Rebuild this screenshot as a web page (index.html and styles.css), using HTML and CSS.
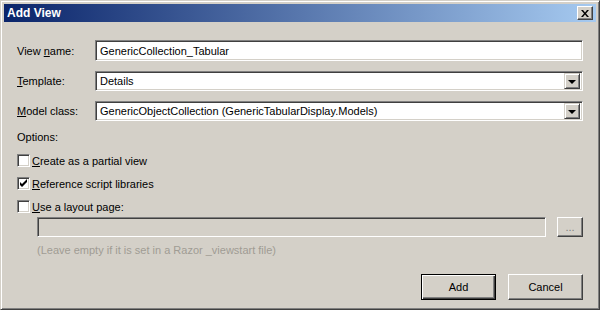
FILE: index.html
```html
<!DOCTYPE html>
<html lang="en">
<head>
    <meta charset="UTF-8">
    <title>Add View</title>
    <link rel="stylesheet" href="styles.css">
</head>
<body>
    <div class="window">
        <div class="titlebar">
            <span class="title">Add View</span>
            <div class="close-btn">
                <svg width="8" height="7" viewBox="0 0 8 7"><path d="M0 0h2l2 2.5 2-2.5h2l-3 3.5 3 3.5h-2l-2-2.5-2 2.5h-2l3-3.5z" fill="#000"/></svg>
            </div>
        </div>
        <div class="content">
            <div class="field-row row-name">
                <label>View <u>n</u>ame:</label>
                <div class="textbox">GenericCollection_Tabular</div>
            </div>
            <div class="field-row">
                <label><u>T</u>emplate:</label>
                <div class="textbox combo">
                    <span>Details</span>
                    <div class="drop-btn"><span class="arrow"></span></div>
                </div>
            </div>
            <div class="field-row">
                <label><u>M</u>odel class:</label>
                <div class="textbox combo">
                    <span>GenericObjectCollection (GenericTabularDisplay.Models)</span>
                    <div class="drop-btn"><span class="arrow"></span></div>
                </div>
            </div>

            <div class="options-label">Options:</div>
            <div class="check-row">
                <span class="checkbox"></span>
                <span><u>C</u>reate as a partial view</span>
            </div>
            <div class="check-row">
                <span class="checkbox">
                    <svg width="9" height="9" viewBox="0 0 9 9"><path d="M1 3v3l2 2 5-5v-3l-5 5z" fill="#000"/></svg>
                </span>
                <span><u>R</u>eference script libraries</span>
            </div>
            <div class="check-row">
                <span class="checkbox"></span>
                <span><u>U</u>se a layout page:</span>
            </div>

            <div class="layout-row">
                <div class="textbox disabled"></div>
                <div class="button browse"><span>...</span></div>
            </div>
            <div class="hint">(Leave empty if it is set in a Razor _viewstart file)</div>

            <div class="actions">
                <div class="button default"><span>Add</span></div>
                <div class="button"><span>Cancel</span></div>
            </div>
        </div>
    </div>
</body>
</html>
```

FILE: styles.css
```css
* { margin: 0; padding: 0; box-sizing: border-box; }
body {
    font-family: "Liberation Sans", Arial, sans-serif;
    font-size: 11px;
    color: #000;
    background: #d4d0c8;
}
.window {
    width: 600px;
    height: 310px;
    background: #d4d0c8;
    border: 1px solid;
    border-color: #d4d0c8 #404040 #404040 #d4d0c8;
    box-shadow: inset 1px 1px #fff, inset -1px -1px #808080;
    padding: 3px;
}
.titlebar {
    height: 18px;
    display: flex;
    align-items: center;
    justify-content: space-between;
    padding: 0 3px;
    background: linear-gradient(to right, #0a246a, #a6caf0);
}
.title { color: #fff; font-weight: bold; font-size: 12px; }
.close-btn {
    width: 16px;
    height: 14px;
    display: flex;
    align-items: center;
    justify-content: center;
    background: #d4d0c8;
    border: 1px solid;
    border-color: #fff #404040 #404040 #fff;
    box-shadow: inset -1px -1px #808080;
}
.close-btn svg { margin-left: -1px; }

.content { padding: 18px 13px 0 13px; }

.field-row {
    display: grid;
    grid-template-columns: 78px 1fr;
    align-items: center;
    margin-bottom: 10px;
}
.textbox {
    height: 20px;
    background: #fff;
    border: 1px solid;
    border-color: #808080 #fff #fff #808080;
    box-shadow: inset 1px 1px #404040, inset -1px -1px #d4d0c8;
    padding: 0 3px 0 4px;
    display: flex;
    align-items: center;
    white-space: nowrap;
}
.row-name .textbox { height: 21px; }
.combo { justify-content: space-between; padding-right: 2px; }
.drop-btn {
    width: 16px;
    height: 16px;
    background: #d4d0c8;
    border: 1px solid;
    border-color: #d4d0c8 #404040 #404040 #d4d0c8;
    box-shadow: inset 1px 1px #fff, inset -1px -1px #808080;
    display: flex;
    align-items: center;
    justify-content: center;
}
.arrow {
    width: 0;
    height: 0;
    border-left: 4px solid transparent;
    border-right: 4px solid transparent;
    border-top: 4px solid #000;
    margin-top: 1px;
}

.options-label { margin-top: 4px; line-height: 13px; }
.check-row {
    display: flex;
    align-items: center;
    gap: 2px;
    height: 13px;
    margin-top: 10px;
}
.checkbox {
    width: 13px;
    height: 13px;
    background: #fff;
    border: 1px solid;
    border-color: #808080 #fff #fff #808080;
    box-shadow: inset 1px 1px #404040, inset -1px -1px #d4d0c8;
    display: flex;
    align-items: center;
    justify-content: center;
}

.layout-row {
    display: flex;
    gap: 11px;
    margin: 4px 0 0 20px;
}
.textbox.disabled { flex: 1; background: #d4d0c8; }
.button {
    width: 75px;
    height: 26px;
    background: #d4d0c8;
    border: 1px solid;
    border-color: #fff #404040 #404040 #fff;
    box-shadow: inset -1px -1px #808080;
    display: flex;
    align-items: center;
    justify-content: center;
}
.button.browse { width: 26px; height: 20px; color: #808080; }
.button.default {
    border-color: #000;
    box-shadow: inset 1px 1px #fff, inset -1px -1px #404040, inset -2px -2px #808080;
}
.hint {
    margin: 6px 0 0 20px;
    color: #a09c94;
    line-height: 14px;
}
.actions {
    display: flex;
    justify-content: flex-end;
    gap: 12px;
    margin-top: 17px;
}
```
